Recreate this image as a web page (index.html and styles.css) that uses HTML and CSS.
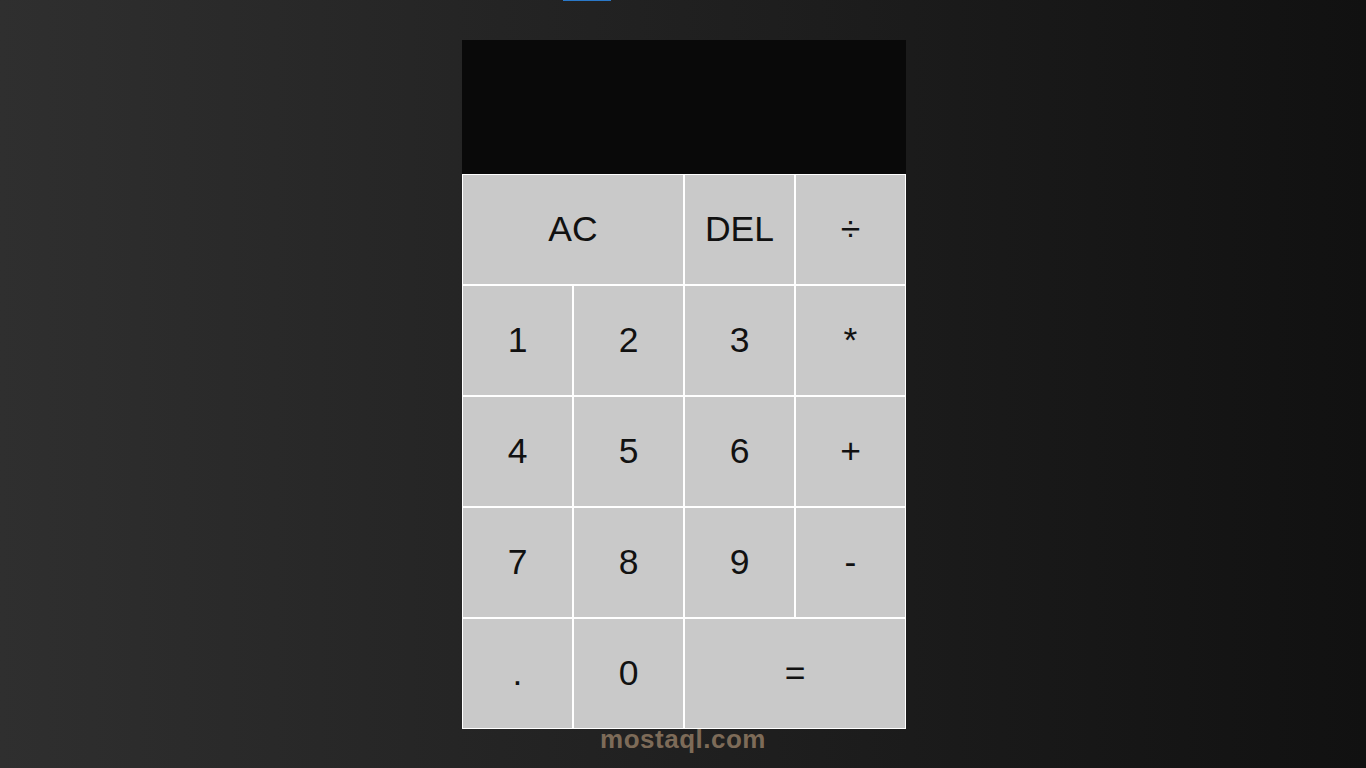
FILE: index.html
```html
<!DOCTYPE html>
<html lang="en">
<head>
    <meta charset="UTF-8">
    <meta name="viewport" content="width=device-width, initial-scale=1.0">
    <title>Calculator</title>
    <link rel="stylesheet" href="styles.css">
</head>
<body>

<div class="top-mark"></div>

<div class="calculator-grid">
    <!-- output screen -->
    <div class="output">
        <div class="previous-operand"></div>
        <div class="current-operand"></div>
    </div>

    <button class="span-two">AC</button>
    <button>DEL</button>
    <button>÷</button>
    <button>1</button>
    <button>2</button>
    <button>3</button>
    <button>*</button>
    <button>4</button>
    <button>5</button>
    <button>6</button>
    <button>+</button>
    <button>7</button>
    <button>8</button>
    <button>9</button>
    <button>-</button>
    <button>.</button>
    <button>0</button>
    <button class="span-two">=</button>
</div>

<div class="watermark">mostaql.com</div>

</body>
</html>
```

FILE: styles.css
```css
*, *::before, *::after {
    box-sizing: border-box;
    font-family: "Liberation Sans", Arial, sans-serif;
    font-weight: normal;
}
body {
    margin: 0;
    padding: 0;
    background: linear-gradient(to right, #2f2f2f, #111111);
}
.calculator-grid {
    display: grid;
    justify-content: center;
    align-content: center;
    min-height: 100vh;
    padding-left: 2px;
    grid-template-columns: repeat(4, 111px);
    grid-template-rows: minmax(134px, auto) repeat(5, 111px);
}
.calculator-grid > button {
    cursor: pointer;
    font-size: 35.5px;
    color: #111111;
    border: 1px solid #ffffff;
    outline: none;
    background-color: #c9c9c9;
    padding: 0;
}
.calculator-grid > button:hover {
    background-color: #e6e6e6;
}
.span-two {
    grid-column: span 2;
}
.output {
    grid-column: 1 / -1;
    background-color: #090909;
    display: flex;
    align-items: flex-end;
    justify-content: space-around;
    flex-direction: column;
    padding: 11px;
    word-wrap: break-word;
    word-break: break-all;
}
.output .previous-operand {
    color: rgba(255, 255, 255, .75);
    font-size: 27px;
}
.output .current-operand {
    color: white;
    font-size: 44px;
}
.top-mark {
    position: absolute;
    top: 0;
    left: 563px;
    width: 48px;
    height: 1px;
    background-color: #2a78c8;
}
.watermark {
    position: absolute;
    left: 0;
    right: 0;
    top: 724px;
    text-align: center;
    font-size: 26px;
    font-weight: bold;
    color: #7d6b58;
    letter-spacing: 0.5px;
}
```
